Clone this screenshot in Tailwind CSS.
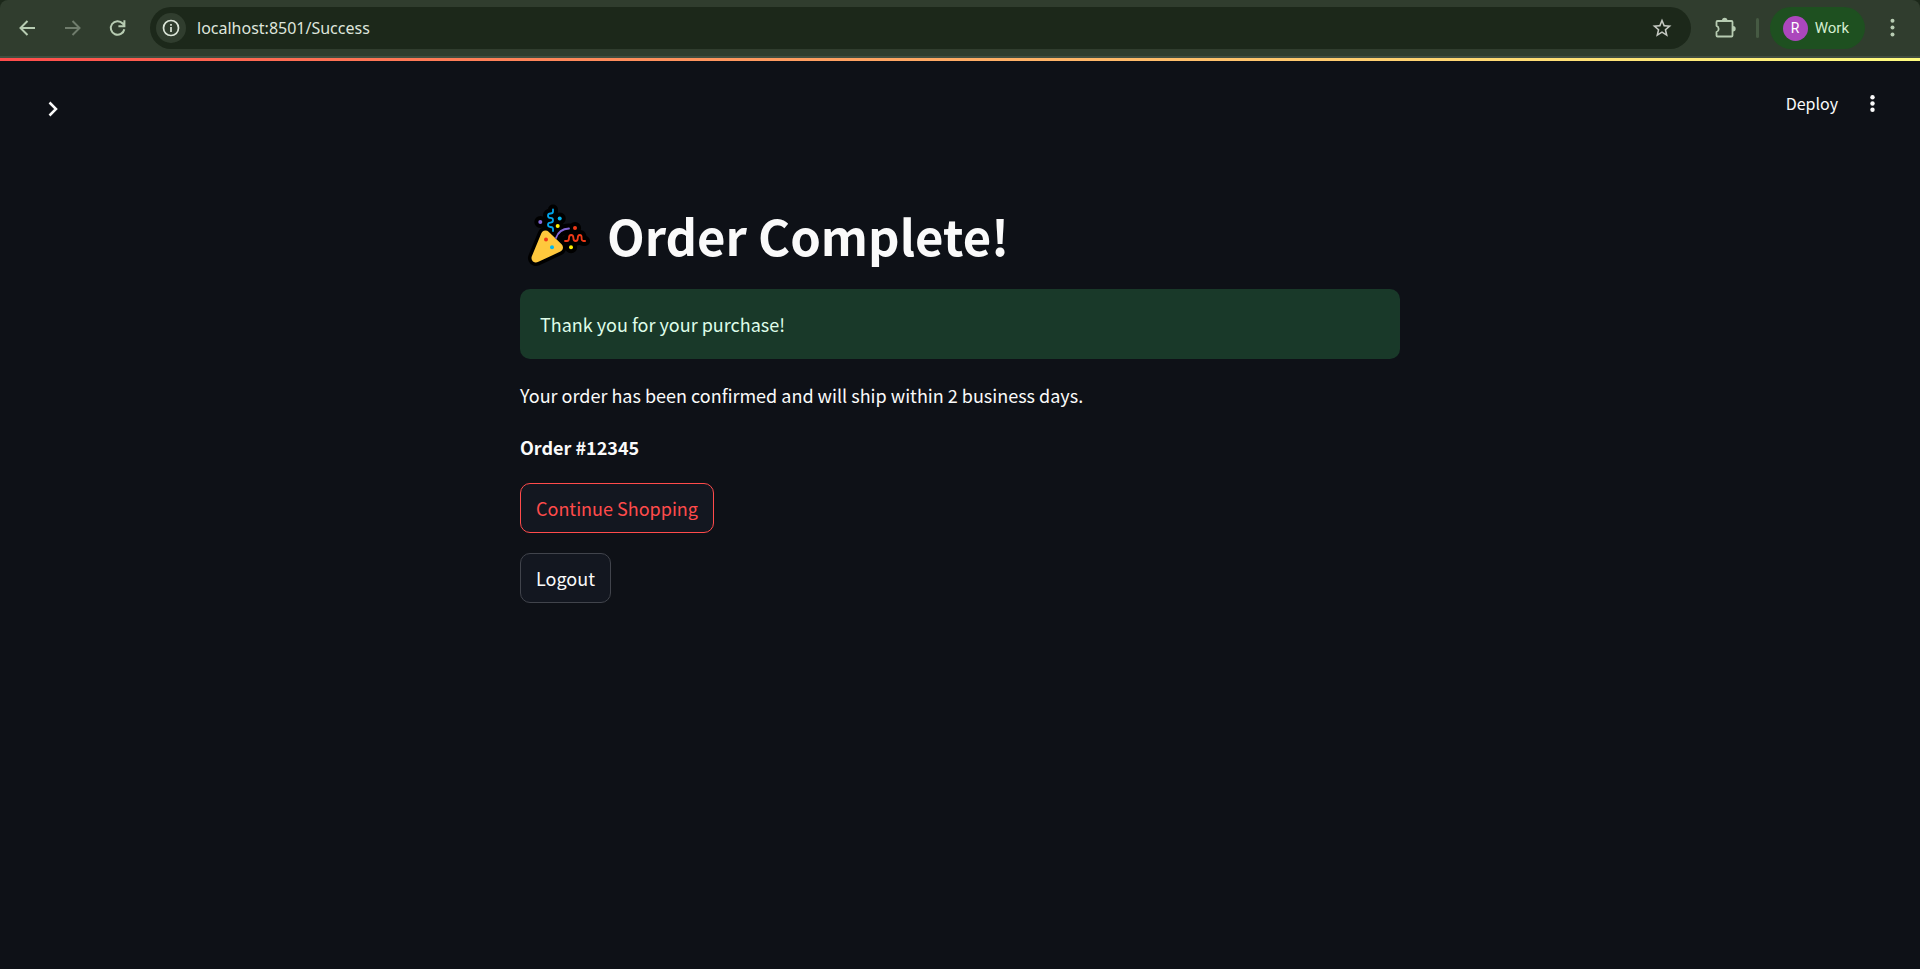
<!DOCTYPE html>
<html lang="en">
<head>
<meta charset="utf-8">
<title>Success</title>
<script src="https://cdn.jsdelivr.net/npm/@tailwindcss/browser@4"></script>
</head>
<body class="min-h-screen flex flex-col bg-[#0e1117] text-[#fafafa] font-['Noto_Sans_CJK_SC',sans-serif]">
  <!-- Browser toolbar -->
  <div class="bg-[#1c281a]">
    <header class="flex h-[58px] items-center rounded-t-lg border-b-2 border-[#424e40] bg-[#303d2e] pr-4 text-[#b7ccb2]">
      <div class="flex items-center gap-[21px] pl-[15px]">
        <button type="button" aria-label="Back" class="size-6"><svg viewBox="0 0 24 24" class="size-6" fill="none" stroke="currentColor" stroke-width="2"><path d="M20 12H6M12.500 5l-7 7 7 7"/></svg></button>
        <button type="button" aria-label="Forward" class="size-6 text-[#6f7c6c]"><svg viewBox="0 0 24 24" class="size-6" fill="none" stroke="currentColor" stroke-width="2"><path d="M5 12H19M12.500 5l7 7-7 7"/></svg></button>
        <button type="button" aria-label="Reload" class="size-6"><svg viewBox="0 0 24 24" class="size-6" fill="none" stroke="currentColor" stroke-width="2"><path d="M19.300 13.200a6.800 6.800 0 1 1-1.600-5.700l2 2M19.400 4.200v6h-6"/></svg></button>
      </div>
      <div class="ml-[21px] flex h-[42px] flex-1 items-center rounded-full bg-[#1c281a] pr-[17px] pl-[6px]">
        <button type="button" aria-label="Site information" class="flex size-[30px] items-center justify-center rounded-full bg-[#303d2e] text-[#dbe5d8]"><svg viewBox="0 0 20 20" class="size-5" fill="none" stroke="currentColor" stroke-width="1.700"><circle cx="10" cy="10" r="7.500"/><path d="M10 9v5M10 6v1.800"/></svg></button>
        <input type="text" aria-label="Address" value="localhost:8501/Success" class="ml-[11px] min-w-0 flex-1 bg-transparent text-base text-[#dfe5dc] outline-none font-['Noto_Sans',sans-serif]">
        <button type="button" aria-label="Bookmark" class="size-6 text-[#c5c9c2]"><svg viewBox="0 0 24 24" class="size-6" fill="currentColor"><path d="M21.500 9.500l-6.800-.6L12 2.600 9.300 8.900l-6.800.6 5.200 4.500-1.600 6.700L12 17.100l5.900 3.600-1.600-6.700zM12 15.300l-3.500 2.100.9-4-3.100-2.700 4.100-.3L12 6.600l1.600 3.800 4.100.3-3.100 2.700.9 4z"/></svg></button>
      </div>
      <button type="button" aria-label="Extensions" class="ml-[23px] size-6"><svg viewBox="0 0 24 24" class="size-6" fill="none" stroke="currentColor" stroke-width="1.800" stroke-linejoin="round"><path d="M3.500 5h14a1 1 0 0 1 1 1v13.500a1 1 0 0 1-1 1h-14a1 1 0 0 1-1-1v-3.500a3.300 3.300 0 0 0 0-6.200V6a1 1 0 0 1 1-1z"/><path d="M8 4.500a2.700 2.700 0 0 1 5.400 0zM19 10a2.700 2.700 0 0 1 0 5.400z" fill="currentColor" stroke="none"/></svg></button>
      <span class="ml-[18px] h-5 w-[3px] rounded-full bg-[#465a43]"></span>
      <button type="button" class="ml-[11px] flex h-[42px] items-center gap-[7px] rounded-full bg-[#1e5020] pr-4 pl-[13px] text-[15px] text-[#d4edcf] font-['Roboto',sans-serif]"><span class="flex size-[25px] items-center justify-center rounded-full bg-[#ab47bc] text-sm text-white">R</span>Work</button>
      <button type="button" aria-label="Browser menu" class="ml-[15px] size-6"><svg viewBox="0 0 24 24" class="size-6" fill="currentColor"><circle cx="12.500" cy="4.700" r="2"/><circle cx="12.500" cy="11.600" r="2"/><circle cx="12.500" cy="18.500" r="2"/></svg></button>
    </header>
  </div>
  <div class="h-[3px] bg-linear-to-r from-[#ff4b4b] to-[#fffd80]"></div>

  <!-- App header -->
  <div class="flex items-center justify-between py-6 pr-9 pl-10">
    <button type="button" aria-label="Open sidebar" class="mt-3 size-6"><svg viewBox="0 0 24 24" class="size-6" fill="none" stroke="currentColor" stroke-width="2.500"><path d="M9.500 5.500l6.500 6.500-6.500 6.500"/></svg></button>
    <div class="flex items-center gap-[22px]">
      <button type="button" class="text-base">Deploy</button>
      <button type="button" aria-label="Main menu" class="size-6"><svg viewBox="0 0 24 24" class="size-6" fill="currentColor"><circle cx="12.500" cy="6.200" r="2.200"/><circle cx="12.500" cy="12.500" r="2.200"/><circle cx="12.500" cy="18.800" r="2.200"/></svg></button>
    </div>
  </div>

  <main class="mx-auto mt-[54px] flex w-full max-w-[880px] flex-col items-start gap-5">
    <h1 class="flex h-[70px] items-center gap-[7px] text-[49px] leading-none font-bold">
      <svg viewBox="0 -1 80 80" role="img" aria-label="Party popper" class="size-20" fill="none" stroke-linecap="round" stroke-linejoin="round">
        <g stroke="#000">
          <path stroke-width="16" d="M25.500 40L38.500 52.500 16 63z" fill="#000"/>
          <path stroke-width="10" d="M33 14.500v2q0 2-2.500 2t-2.500 2.200 2.500 2.200 2.500 2.300-2.500 2.400-2.500 2.200 2.500 2.200 2.500 2v2M36 43q3-9 13-9.500M45 46h2q2 0 2-3t2.200-3 2.200 3 2.200 3 2.200-3 2-3 1.800 3 2 3h1.500"/>
          <path stroke-width="12" d="M20.300 27h.1M39.700 23.500h.1M37.700 31h.1M55 33h.1M51 52.300h.1"/>
        </g>
        <path d="M25.500 40L38.500 52.500 16 63z" fill="#ffc83d" stroke="#ffc83d" stroke-width="9"/>
        <path d="M33 14.500v2q0 2-2.500 2t-2.500 2.200 2.500 2.200 2.500 2.300-2.500 2.400-2.500 2.200 2.500 2.200 2.500 2v2" stroke="#00a6ed" stroke-width="1.800"/>
        <path d="M36 43q3-9 13-9.500" stroke="#8467d7" stroke-width="1.800"/>
        <path d="M45 46h2q2 0 2-3t2.200-3 2.200 3 2.200 3 2.200-3 2-3 1.800 3 2 3h1.500" stroke="#f03a17" stroke-width="1.800"/>
        <g fill="#00b7f0"><circle cx="39.700" cy="23.500" r="2"/><circle cx="32" cy="52.300" r="2"/></g>
        <g fill="#f03a17"><circle cx="55" cy="33" r="2"/><circle cx="26" cy="44.500" r="2"/></g>
        <g fill="#fff100"><circle cx="37.700" cy="31" r="2"/><circle cx="51" cy="52.300" r="2"/></g>
        <circle cx="20.300" cy="27" r="2" fill="#8467d7"/>
      </svg>
      Order Complete!
    </h1>
    <div role="status" class="w-full rounded-[10px] bg-[#193929] px-5 py-[19px] text-lg leading-8 text-[#dffde9]">Thank you for your purchase!</div>
    <p class="text-lg leading-8">Your order has been confirmed and will ship within 2 business days.</p>
    <p class="text-lg leading-8 font-bold">Order #12345</p>
    <button type="button" class="h-[50px] rounded-[10px] border border-[#ff4b4b] bg-[#131720] px-[15px] text-lg text-[#ff4b4b]">Continue Shopping</button>
    <button type="button" class="h-[50px] rounded-[10px] border border-[#41444c] bg-[#131720] px-[15px] text-lg">Logout</button>
  </main>
</body>
</html>
